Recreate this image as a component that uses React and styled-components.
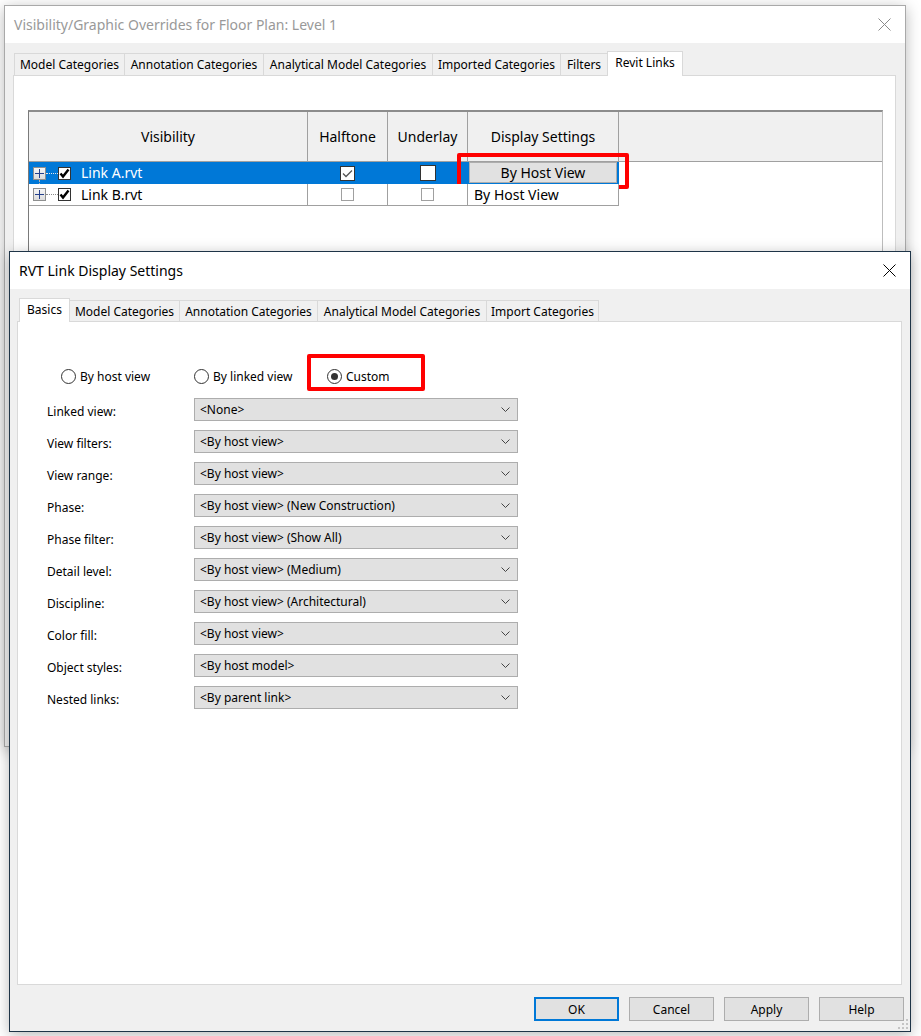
import React from 'react';
import styled, { createGlobalStyle } from 'styled-components';

const GlobalStyle = createGlobalStyle`
  html, body { margin: 0; padding: 0; background: #fff; }
  body {
    font-family: "Noto Sans", "DejaVu Sans", sans-serif;
    font-size: 12px;
    color: #000;
  }
`;

const Desktop = styled.div`
  position: relative;
  width: 921px;
  height: 1036px;
  overflow: hidden;
  background: #fff;
`;

// dialogs sit over each other like windows on a desktop
const Window = styled.div`
  position: absolute;
  left: ${p => p.$x}px;
  top: ${p => p.$y}px;
  width: ${p => p.$w}px;
  height: ${p => p.$h}px;
  box-sizing: border-box;
  border: 1px solid ${p => (p.$active ? '#1e3447' : '#a9a9a9')};
  background: #f0f0f0;
  box-shadow: 0 3px 14px rgba(0, 0, 0, 0.28);
  display: flex;
  flex-direction: column;
`;

const TitleBar = styled.div`
  flex: none;
  height: 37px;
  background: #fff;
  display: flex;
  align-items: center;
  padding-left: 9px;
  font-size: 14px;
  color: ${p => (p.$active ? '#000' : '#999')};
`;

const TitleText = styled.div`
  flex: 1;
  padding-bottom: 1px;
`;

const CloseBtn = styled.div`
  width: 42px;
  height: 100%;
  display: flex;
  align-items: center;
  justify-content: center;
`;

const Body = styled.div`
  flex: 1;
  min-height: 0;
  display: flex;
  flex-direction: column;
  padding: ${p => p.$pad};
`;

const TabStrip = styled.div`
  display: flex;
  align-items: flex-end;
  padding-left: ${p => p.$indent}px;
  flex: none;
`;

const Tab = styled.div`
  box-sizing: border-box;
  width: ${p => p.$w + 1}px;
  height: ${p => (p.$selected ? p.$h + 3 : p.$h)}px;
  margin-right: -1px;
  margin-bottom: ${p => (p.$selected ? -1 : 0)}px;
  border: 1px solid #d9d9d9;
  border-bottom: none;
  background: ${p => (p.$selected ? '#fff' : '#f0f0f0')};
  position: relative;
  z-index: ${p => (p.$selected ? 1 : 0)};
  display: flex;
  align-items: ${p => (p.$selected ? 'flex-start' : 'center')};
  padding-top: ${p => (p.$selected ? 2 : 0)}px;
  justify-content: center;
  font-size: 12px;
  white-space: nowrap;
  color: #000;
`;

const Panel = styled.div`
  flex: 1;
  min-height: 0;
  background: #fff;
  border: 1px solid #d9d9d9;
  display: flex;
  flex-direction: column;
  padding: ${p => p.$pad};
`;

/* ---------- links grid ---------- */

const Grid = styled.div`
  flex: 1;
  background: #fff;
  border-top: 2px solid #8c8c8c;
  border-left: 1px solid #7a7a7a;
  border-right: 1px solid #bdbdbd;
  margin-bottom: 30px;
`;

const GridRow = styled.div`
  display: grid;
  grid-template-columns: 279px 80px 80px 151px 1fr;
  height: ${p => p.$h}px;
`;

const HeadCell = styled.div`
  box-sizing: border-box;
  background: #f0f0f0;
  border-right: ${p => (p.$last ? 'none' : '1px solid #a0a0a0')};
  border-bottom: 1px solid #a0a0a0;
  display: flex;
  align-items: center;
  justify-content: center;
  font-size: 14px;
`;

const Cell = styled.div`
  box-sizing: border-box;
  position: relative;
  background: ${p => (p.$selected ? '#0078d7' : '#fff')};
  color: ${p => (p.$selected ? '#fff' : '#000')};
  border-right: 1px solid ${p => (p.$selected ? '#0078d7' : '#a0a0a0')};
  border-bottom: 1px solid ${p => (p.$selected ? '#fff' : '#a0a0a0')};
  display: flex;
  align-items: center;
  justify-content: ${p => p.$justify || 'center'};
  padding-left: ${p => p.$padLeft || 0}px;
  font-size: 14px;
`;

const Filler = styled.div`
  background: #fff;
`;

const Expander = styled.div`
  position: relative;
  box-sizing: border-box;
  width: 13px;
  height: 13px;
  border: 1px solid #8e8f8f;
  background: linear-gradient(#f6f6f6, #dcdcdc);
  display: flex;
  align-items: center;
  justify-content: center;
  flex: none;
  &::after {
    content: '';
    display: ${p => (p.$branch ? 'block' : 'none')};
    position: absolute;
    left: 5px;
    top: 12px;
    height: 12px;
    border-left: 1px dotted #b5b5b5;
  }
`;

const TreeDots = styled.div`
  width: 12px;
  border-top: 1px dotted ${p => (p.$light ? '#e6e6e6' : '#8a8a8a')};
  flex: none;
`;

const CheckBox = styled.div`
  box-sizing: border-box;
  width: ${p => p.$size}px;
  height: ${p => p.$size}px;
  border: 1px solid ${p => p.$border};
  background: #fff;
  display: flex;
  align-items: center;
  justify-content: center;
  flex: none;
`;

const LinkName = styled.span`
  margin-left: 10px;
  padding-bottom: 1px;
`;

const CellButton = styled.div`
  box-sizing: border-box;
  flex: 1;
  align-self: stretch;
  margin: 0 1px 1px 1px;
  background: #e1e1e1;
  border: 1px solid #adadad;
  color: #000;
  display: flex;
  align-items: center;
  justify-content: center;
  font-size: 14px;
`;

const Callout = styled.div`
  position: absolute;
  left: ${p => p.$x}px;
  top: ${p => p.$y}px;
  width: ${p => p.$w}px;
  height: ${p => p.$h}px;
  box-sizing: border-box;
  border: 4px solid #ff0000;
  border-radius: 2px;
  pointer-events: none;
`;

/* ---------- link display settings ---------- */

const RadioRow = styled.div`
  display: grid;
  grid-template-columns: repeat(3, 133px);
  margin-left: 43px;
  height: 16px;
`;

const RadioItem = styled.label`
  position: relative;
  display: flex;
  align-items: center;
  gap: 4px;
  font-size: 12px;
`;

const RadioDot = styled.span`
  box-sizing: border-box;
  width: 15px;
  height: 15px;
  border-radius: 50%;
  border: 1px solid #333;
  background: #fff;
  display: flex;
  align-items: center;
  justify-content: center;
  flex: none;
  &::after {
    content: '';
    display: ${p => (p.$on ? 'block' : 'none')};
    width: 7px;
    height: 7px;
    border-radius: 50%;
    background: #333;
  }
`;

const Form = styled.div`
  display: grid;
  grid-template-columns: 147px 324px;
  grid-auto-rows: 23px;
  row-gap: 9px;
  margin-top: 14px;
  padding-left: 29px;
`;

const FieldLabel = styled.div`
  display: flex;
  align-items: center;
  padding-top: 4px;
  font-size: 12px;
`;

const Select = styled.div`
  box-sizing: border-box;
  border: 1px solid #adadad;
  background: #e1e1e1;
  display: flex;
  align-items: center;
  justify-content: space-between;
  padding: 0 7px 1px 5px;
  font-size: 12px;
`;

const ButtonBar = styled.div`
  flex: none;
  display: flex;
  justify-content: flex-end;
  gap: 10px;
  margin-top: 12px;
  margin-right: -2px;
`;

const DialogButton = styled.div`
  box-sizing: border-box;
  width: 85px;
  height: 24px;
  background: #e1e1e1;
  border: ${p => (p.$default ? '2px solid #0078d7' : '1px solid #adadad')};
  display: flex;
  align-items: center;
  justify-content: center;
  font-size: 12px;
`;

const Grip = styled.svg`
  position: absolute;
  right: 2px;
  bottom: 2px;
`;

const CloseIcon = ({ color }) => (
  <svg width="13" height="13" viewBox="0 0 13 13">
    <path d="M0.5 0.5 L12.5 12.5 M12.5 0.5 L0.5 12.5" stroke={color} strokeWidth="1" fill="none" />
  </svg>
);

const Plus = () => (
  <svg width="9" height="9" viewBox="0 0 9 9">
    <path d="M0 4.5 H9 M4.5 0 V9" stroke="#24408c" strokeWidth="1" />
  </svg>
);

const BoldCheck = () => (
  <svg width="11" height="11" viewBox="0 0 11 11">
    <path d="M1.5 5.5 L4 8.5 L9.5 1.5" stroke="#000" strokeWidth="2.4" fill="none" />
  </svg>
);

const ThinCheck = () => (
  <svg width="11" height="9" viewBox="0 0 11 9">
    <path d="M1 4.5 L4 7.5 L10 1.5" stroke="#555" strokeWidth="1.3" fill="none" />
  </svg>
);

const Chevron = () => (
  <svg width="9" height="5" viewBox="0 0 9 5">
    <path d="M0.5 0.5 L4.5 4.5 L8.5 0.5" stroke="#444" strokeWidth="1" fill="none" />
  </svg>
);

const outerTabs = [
  ['Model Categories', 110],
  ['Annotation Categories', 139],
  ['Analytical Model Categories', 169],
  ['Imported Categories', 128],
  ['Filters', 47],
  ['Revit Links', 75, true],
];

const innerTabs = [
  ['Basics', 50, true],
  ['Model Categories', 110],
  ['Annotation Categories', 138],
  ['Analytical Model Categories', 169],
  ['Import Categories', 112],
];

const links = [
  { name: 'Link A.rvt', selected: true },
  { name: 'Link B.rvt', selected: false },
];

const fields = [
  ['Linked view:', '<None>'],
  ['View filters:', '<By host view>'],
  ['View range:', '<By host view>'],
  ['Phase:', '<By host view> (New Construction)'],
  ['Phase filter:', '<By host view> (Show All)'],
  ['Detail level:', '<By host view> (Medium)'],
  ['Discipline:', '<By host view> (Architectural)'],
  ['Color fill:', '<By host view>'],
  ['Object styles:', '<By host model>'],
  ['Nested links:', '<By parent link>'],
];

const App = () => (
  <Desktop>
    <GlobalStyle />

    <Window $x={4} $y={5} $w={902} $h={742}>
      <TitleBar>
        <TitleText>Visibility/Graphic Overrides for Floor Plan: Level 1</TitleText>
        <CloseBtn><CloseIcon color="#8a8a8a" /></CloseBtn>
      </TitleBar>
      <Body $pad="8px 9px 40px 8px">
        <TabStrip $indent={1}>
          {outerTabs.map(([label, w, sel]) => (
            <Tab key={label} $w={w} $h={22} $selected={sel}>{label}</Tab>
          ))}
        </TabStrip>
        <Panel $pad="34px 12px 0 14px">
          <Grid>
            <GridRow $h={50}>
              <HeadCell>Visibility</HeadCell>
              <HeadCell>Halftone</HeadCell>
              <HeadCell>Underlay</HeadCell>
              <HeadCell>Display Settings</HeadCell>
              <HeadCell $last />
            </GridRow>
            {links.map((l, i) => (
              <GridRow key={l.name} $h={22}>
                <Cell $selected={l.selected} $justify="flex-start" $padLeft={4}>
                  <Expander $branch={i === 0}><Plus /></Expander>
                  <TreeDots $light={l.selected} />
                  <CheckBox $size={13} $border="#333"><BoldCheck /></CheckBox>
                  <LinkName>{l.name}</LinkName>
                </Cell>
                <Cell $selected={l.selected}>
                  {l.selected ? (
                    <CheckBox $size={15} $border="#333"><ThinCheck /></CheckBox>
                  ) : (
                    <CheckBox $size={13} $border="#a0a0a0" />
                  )}
                </Cell>
                <Cell $selected={l.selected}>
                  {l.selected ? (
                    <CheckBox $size={16} $border="#333" />
                  ) : (
                    <CheckBox $size={13} $border="#a0a0a0" />
                  )}
                </Cell>
                {l.selected ? (
                  <Cell $selected>
                    <CellButton>By Host View</CellButton>
                    <Callout $x={-11} $y={-9} $w={172} $h={36} />
                  </Cell>
                ) : (
                  <Cell $justify="flex-start" $padLeft={6}>By Host View</Cell>
                )}
                <Filler />
              </GridRow>
            ))}
          </Grid>
        </Panel>
      </Body>
    </Window>

    <Window $active $x={9} $y={251} $w={902} $h={781}>
      <TitleBar $active>
        <TitleText>RVT Link Display Settings</TitleText>
        <CloseBtn><CloseIcon color="#000" /></CloseBtn>
      </TitleBar>
      <Body $pad="9px 8px 10px 7px">
        <TabStrip $indent={2}>
          {innerTabs.map(([label, w, sel]) => (
            <Tab key={label} $w={w} $h={21} $selected={sel}>{label}</Tab>
          ))}
        </TabStrip>
        <Panel $pad="46px 0 0 0">
          <RadioRow>
            <RadioItem><RadioDot />By host view</RadioItem>
            <RadioItem><RadioDot />By linked view</RadioItem>
            <RadioItem>
              <RadioDot $on />Custom
              <Callout $x={-20} $y={-14} $w={118} $h={37} />
            </RadioItem>
          </RadioRow>
          <Form>
            {fields.map(([label, value]) => (
              <React.Fragment key={label}>
                <FieldLabel>{label}</FieldLabel>
                <Select>
                  <span>{value}</span>
                  <Chevron />
                </Select>
              </React.Fragment>
            ))}
          </Form>
        </Panel>
        <ButtonBar>
          <DialogButton $default>OK</DialogButton>
          <DialogButton>Cancel</DialogButton>
          <DialogButton>Apply</DialogButton>
          <DialogButton>Help</DialogButton>
        </ButtonBar>
      </Body>
      <Grip width="10" height="10" viewBox="0 0 10 10">
        <rect x="8" y="0" width="2" height="2" fill="#c4c4c4" />
        <rect x="4" y="4" width="2" height="2" fill="#c4c4c4" />
        <rect x="8" y="4" width="2" height="2" fill="#c4c4c4" />
        <rect x="0" y="8" width="2" height="2" fill="#c4c4c4" />
        <rect x="4" y="8" width="2" height="2" fill="#c4c4c4" />
        <rect x="8" y="8" width="2" height="2" fill="#c4c4c4" />
      </Grip>
    </Window>
  </Desktop>
);

export default App;
